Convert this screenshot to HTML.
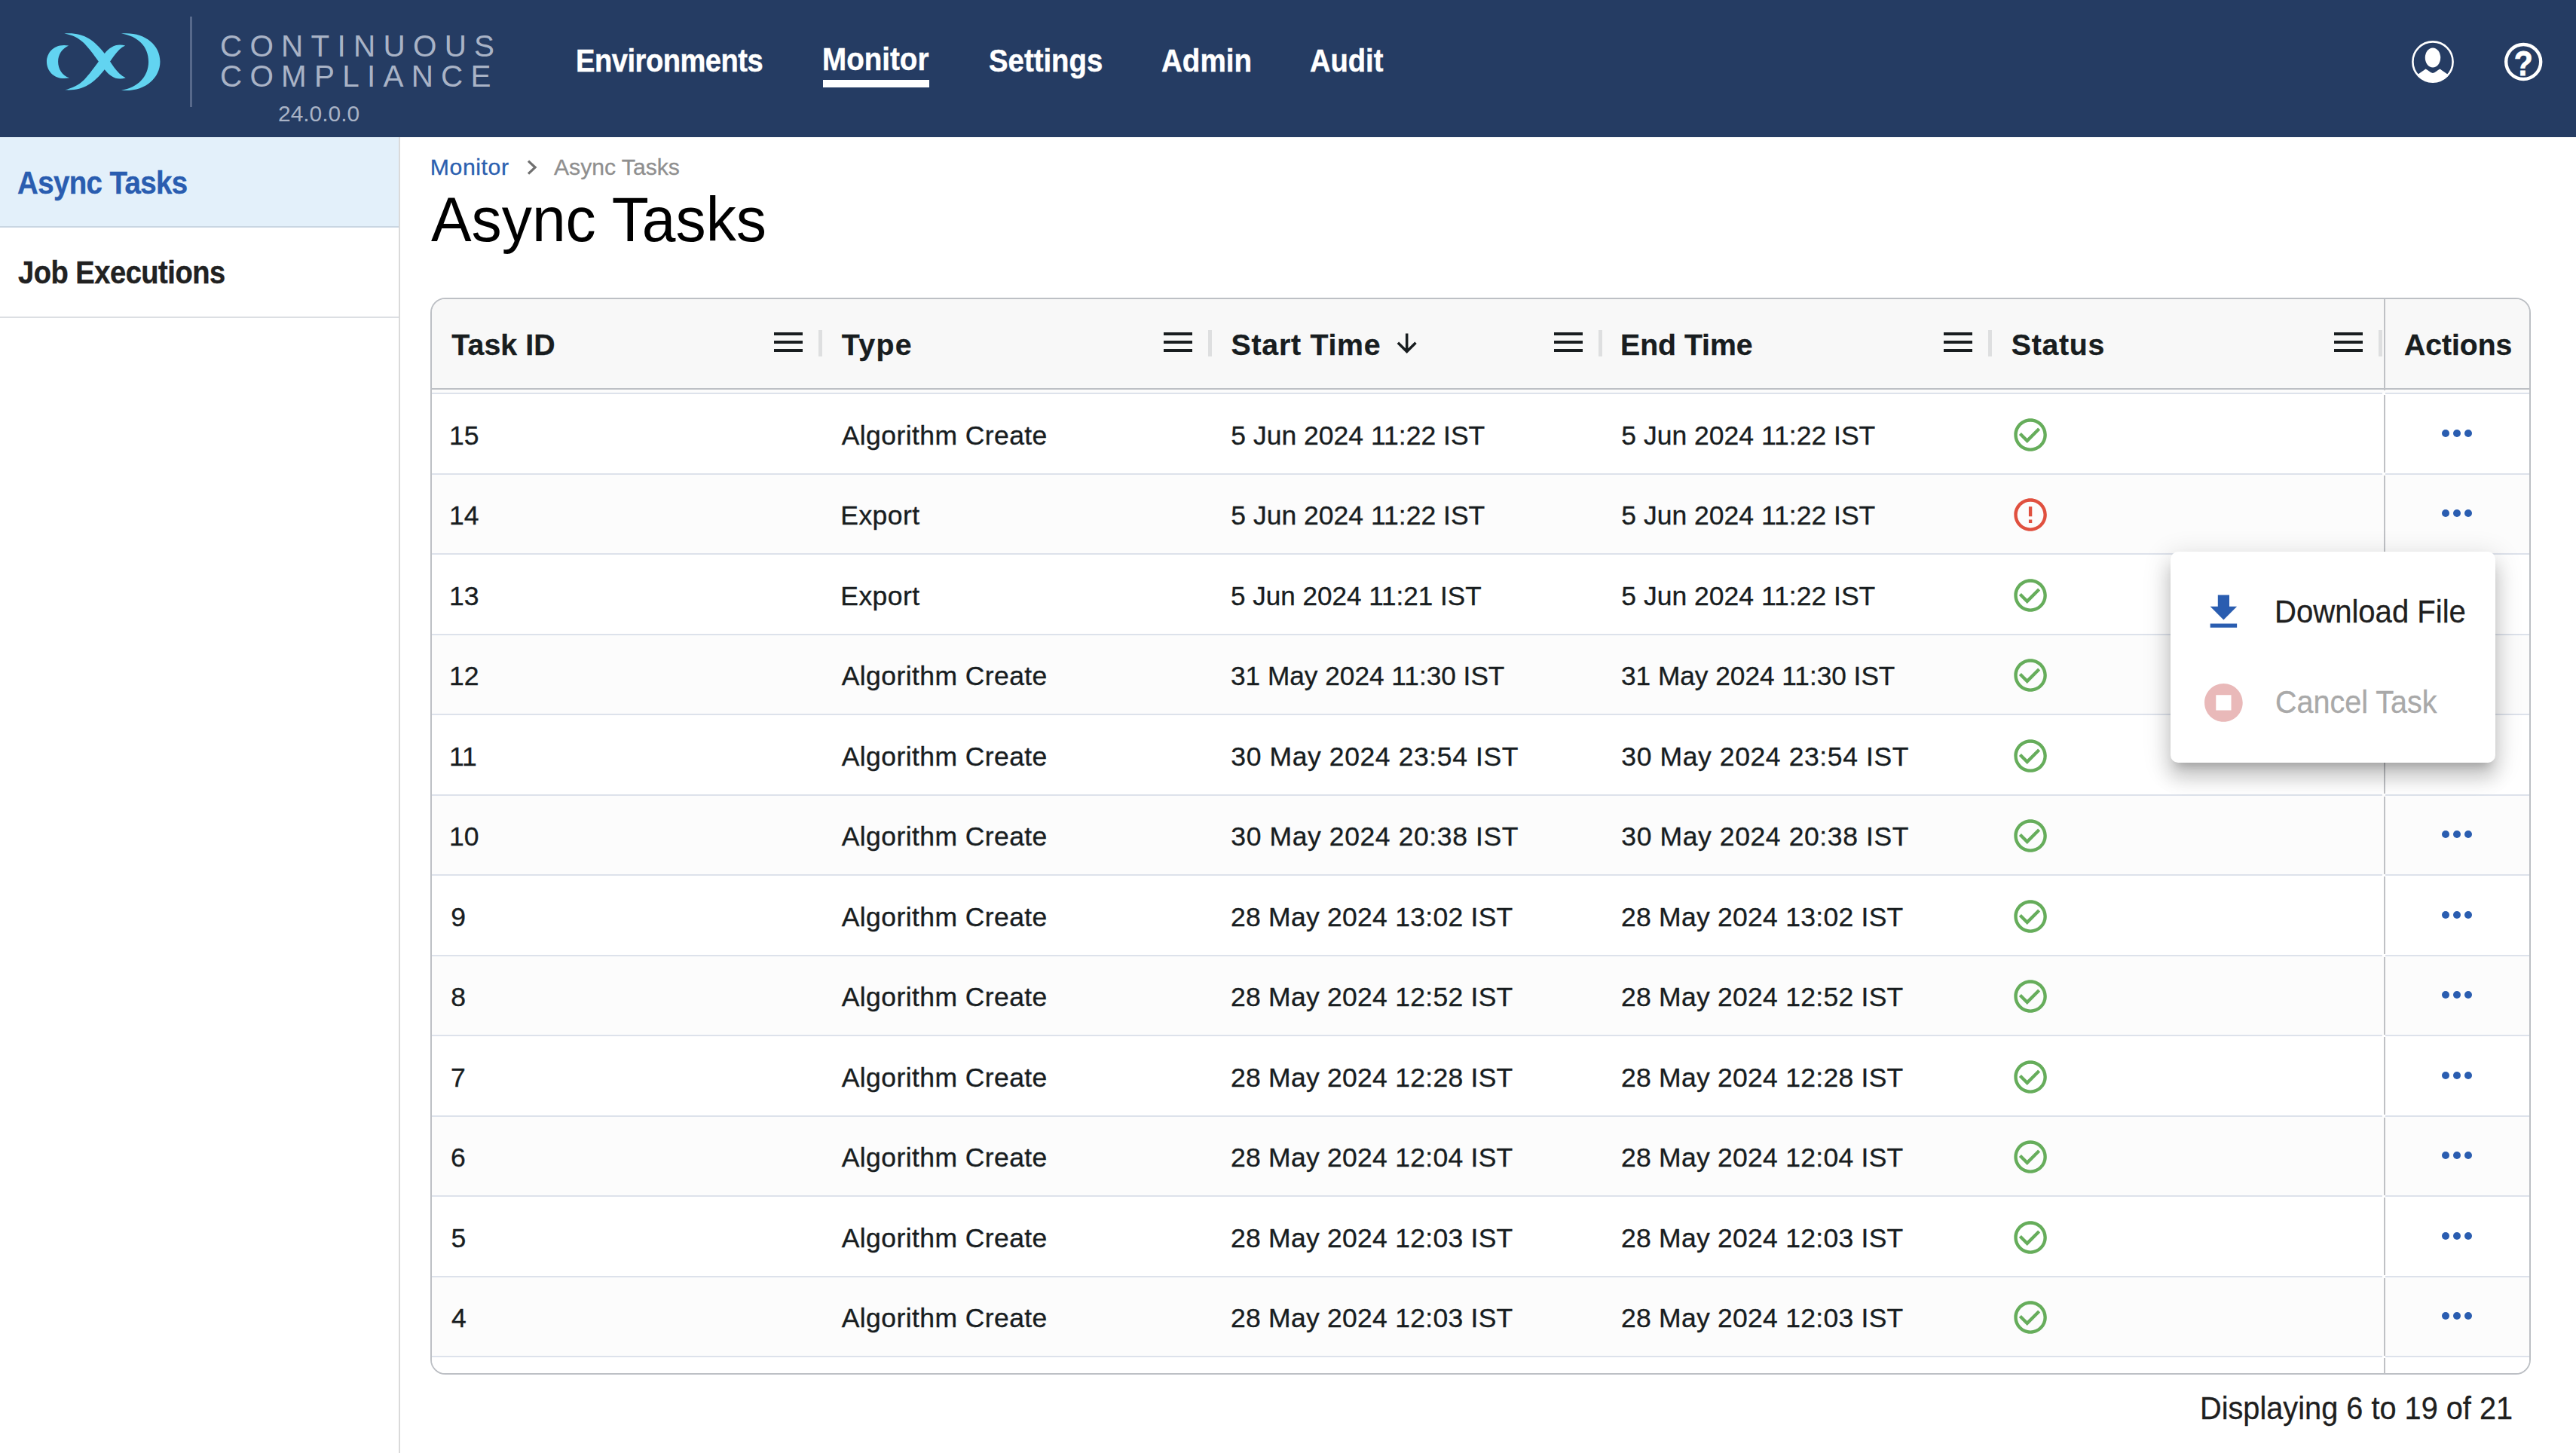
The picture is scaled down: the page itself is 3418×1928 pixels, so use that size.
<!DOCTYPE html>
<html lang="en"><head><meta charset="utf-8"><title>Async Tasks</title>
<style>
html,body{margin:0;padding:0}
body{width:3418px;height:1928px;overflow:hidden;background:#fff;position:relative;font-family:"Liberation Sans",sans-serif}
.t{position:absolute;white-space:nowrap;line-height:1;transform-origin:0 50%}
#hdr{position:absolute;left:0;top:0;width:3418px;height:182px;background:#253c63}
#tbl{position:absolute;border:2px solid #bdc0c5;border-radius:20px;overflow:hidden;background:#fff}
#pop{position:absolute;left:2880px;top:732px;width:431px;height:280px;background:#fff;border-radius:10px;box-shadow:0 12px 13px -8px rgba(0,0,0,.2),0 20px 25px 2px rgba(0,0,0,.14),0 8px 35px 5px rgba(0,0,0,.12)}
</style></head>
<body>
<div id="hdr"></div>
<svg id="logo" viewBox="0 0 2491 1453" style="position:absolute;left:40px;top:20px;width:240px;height:140px" fill="#62d4f1">
<path d="M530,420 C330,385 228,520 228,640 C228,775 340,905 540,865 C440,830 385,740 385,640 C385,545 440,460 530,420 Z"/>
<path d="M470,255 C720,235 870,330 1025,530 C1110,640 1190,810 1315,865 C1190,905 1100,845 1025,750 C945,650 850,500 745,390 C670,315 570,270 470,255 Z"/>
<path d="M480,1030 C720,1045 870,950 1025,750 C1110,640 1190,470 1310,420 C1190,385 1100,435 1025,530 C945,630 850,780 745,890 C670,965 570,1010 480,1030 Z"/>
<path d="M1255,255 C1560,225 1790,400 1790,640 C1790,880 1560,1065 1255,1035 C1480,1000 1630,850 1630,640 C1630,430 1480,290 1255,255 Z"/>
</svg>
<div style="position:absolute;left:252.2px;top:22px;width:2.6px;height:120px;background:#57698b"></div>
<span class="t" style="left:291.95px;top:40.56px;font-size:40.41px;color:#a9b3c6;letter-spacing:10.276px;">CONTINUOUS</span>
<span class="t" style="left:291.95px;top:80.56px;font-size:40.41px;color:#a9b3c6;letter-spacing:10.267px;">COMPLIANCE</span>
<span class="t" style="left:368.99px;top:135.43px;font-size:30.38px;color:#a9b3c6;transform:scaleX(0.9853);">24.0.0.0</span>
<span class="t" style="left:763.75px;top:59.86px;font-size:42.30px;color:#fff;font-weight:700;letter-spacing:-0.517px;transform:scaleX(0.9000);-webkit-text-stroke:0.45px #fff;">Environments</span>
<span class="t" style="left:1091.02px;top:58.26px;font-size:42.30px;color:#fff;font-weight:700;transform:scaleX(0.9124);-webkit-text-stroke:0.45px #fff;">Monitor</span>
<div style="position:absolute;left:1091.9px;top:105.9px;width:141.2px;height:9.8px;background:#fff"></div>
<span class="t" style="left:1311.90px;top:59.86px;font-size:42.30px;color:#fff;font-weight:700;transform:scaleX(0.9066);-webkit-text-stroke:0.45px #fff;">Settings</span>
<span class="t" style="left:1541.04px;top:59.86px;font-size:42.30px;color:#fff;font-weight:700;transform:scaleX(0.9124);-webkit-text-stroke:0.45px #fff;">Admin</span>
<span class="t" style="left:1737.85px;top:59.86px;font-size:42.30px;color:#fff;font-weight:700;transform:scaleX(0.9015);-webkit-text-stroke:0.45px #fff;">Audit</span>
<svg style="position:absolute;left:3198px;top:52px;width:60px;height:60px" viewBox="0 0 60 60">
<defs><clipPath id="uc"><circle cx="30" cy="30" r="26.6"/></clipPath></defs>
<circle cx="30" cy="30" r="26.6" fill="none" stroke="#fff" stroke-width="2.6"/>
<ellipse cx="30" cy="24.5" rx="10.2" ry="13" fill="#fff"/>
<path clip-path="url(#uc)" d="M8,60 L8,48 C13,45 17,42 20.5,39.5 C24,41 27,44.5 30,45 C33,44.5 36,41 39.5,39.5 C43,42 47,45 52,48 L52,60 Z" fill="#fff"/>
</svg>
<svg style="position:absolute;left:3318px;top:52px;width:60px;height:60px" viewBox="0 0 60 60">
<circle cx="30.2" cy="30" r="23" fill="none" stroke="#fff" stroke-width="4.4"/>
<text transform="translate(30.2 47.6) scale(0.88 1)" x="0" y="0" text-anchor="middle" font-family="Liberation Sans, sans-serif" font-weight="700" font-size="46.5" fill="#fff" stroke="#fff" stroke-width="0.9">?</text>
</svg>
<div style="position:absolute;left:0;top:182px;width:529px;height:118.3px;background:#e3f0fa"></div>
<div style="position:absolute;left:0;top:300.3px;width:529px;height:2px;background:#c9d6e2"></div>
<div style="position:absolute;left:0;top:419.5px;width:529px;height:2px;background:#dcdfe3"></div>
<div style="position:absolute;left:529px;top:182px;width:2px;height:1746px;background:#dadada"></div>
<span class="t" style="left:23.04px;top:221.19px;font-size:42.73px;color:#2a5db0;font-weight:700;letter-spacing:-0.665px;transform:scaleX(0.9000);-webkit-text-stroke:0.4px #2a5db0;">Async Tasks</span>
<span class="t" style="left:23.92px;top:340.86px;font-size:42.30px;color:#212121;font-weight:700;letter-spacing:-0.530px;transform:scaleX(0.9000);-webkit-text-stroke:0.4px #212121;">Job Executions</span>
<span class="t" style="left:570.72px;top:206.55px;font-size:30.23px;color:#2b5fb0;letter-spacing:0.595px;-webkit-text-stroke:0.3px #2b5fb0;">Monitor</span>
<svg style="position:absolute;left:696px;top:210px;width:20px;height:25px" viewBox="0 0 20 25"><path d="M5.0,3.6 L14.0,12.1 L5.0,20.6" fill="none" stroke="#707070" stroke-width="3.3"/></svg>
<span class="t" style="left:735.34px;top:206.55px;font-size:30.23px;color:#8f8f8f;transform:scaleX(0.9969);-webkit-text-stroke:0.3px #8f8f8f;">Async Tasks</span>
<span class="t" style="left:571.84px;top:250.89px;font-size:82.85px;color:#000;transform:scaleX(0.9698);">Async Tasks</span>
<div id="tbl" style="left:570.8px;top:395.0px;width:2783.2px;height:1425.0px">
<div style="position:absolute;left:0.00px;top:0.00px;width:2783.20px;height:120.00px;background:#f8f8f8;"></div>
<div style="position:absolute;left:0.00px;top:120.00px;width:2783.20px;height:5.10px;background:#fcfcfc;"></div>
<div style="position:absolute;left:0.00px;top:125.10px;width:2783.20px;height:106.50px;background:#ffffff;"></div>
<div style="position:absolute;left:0.00px;top:231.60px;width:2783.20px;height:106.50px;background:#fcfcfc;"></div>
<div style="position:absolute;left:0.00px;top:338.10px;width:2783.20px;height:106.50px;background:#ffffff;"></div>
<div style="position:absolute;left:0.00px;top:444.60px;width:2783.20px;height:106.50px;background:#fcfcfc;"></div>
<div style="position:absolute;left:0.00px;top:551.10px;width:2783.20px;height:106.50px;background:#ffffff;"></div>
<div style="position:absolute;left:0.00px;top:657.60px;width:2783.20px;height:106.50px;background:#fcfcfc;"></div>
<div style="position:absolute;left:0.00px;top:764.10px;width:2783.20px;height:106.50px;background:#ffffff;"></div>
<div style="position:absolute;left:0.00px;top:870.60px;width:2783.20px;height:106.50px;background:#fcfcfc;"></div>
<div style="position:absolute;left:0.00px;top:977.10px;width:2783.20px;height:106.50px;background:#ffffff;"></div>
<div style="position:absolute;left:0.00px;top:1083.60px;width:2783.20px;height:106.50px;background:#fcfcfc;"></div>
<div style="position:absolute;left:0.00px;top:1190.10px;width:2783.20px;height:106.50px;background:#ffffff;"></div>
<div style="position:absolute;left:0.00px;top:1296.60px;width:2783.20px;height:106.50px;background:#fcfcfc;"></div>
<div style="position:absolute;left:0.00px;top:1403.10px;width:2783.20px;height:106.50px;background:#ffffff;"></div>
<div style="position:absolute;left:0.00px;top:117.80px;width:2783.20px;height:2.20px;background:#bdc0c5;"></div>
<div style="position:absolute;left:0.00px;top:124.10px;width:2588.20px;height:2.00px;background:#dde2eb;"></div>
<div style="position:absolute;left:2592.20px;top:124.10px;width:191.00px;height:2.00px;background:#dde2eb;"></div>
<div style="position:absolute;left:0.00px;top:230.60px;width:2588.20px;height:2.00px;background:#dde2eb;"></div>
<div style="position:absolute;left:2592.20px;top:230.60px;width:191.00px;height:2.00px;background:#dde2eb;"></div>
<div style="position:absolute;left:0.00px;top:337.10px;width:2588.20px;height:2.00px;background:#dde2eb;"></div>
<div style="position:absolute;left:2592.20px;top:337.10px;width:191.00px;height:2.00px;background:#dde2eb;"></div>
<div style="position:absolute;left:0.00px;top:443.60px;width:2588.20px;height:2.00px;background:#dde2eb;"></div>
<div style="position:absolute;left:2592.20px;top:443.60px;width:191.00px;height:2.00px;background:#dde2eb;"></div>
<div style="position:absolute;left:0.00px;top:550.10px;width:2588.20px;height:2.00px;background:#dde2eb;"></div>
<div style="position:absolute;left:2592.20px;top:550.10px;width:191.00px;height:2.00px;background:#dde2eb;"></div>
<div style="position:absolute;left:0.00px;top:656.60px;width:2588.20px;height:2.00px;background:#dde2eb;"></div>
<div style="position:absolute;left:2592.20px;top:656.60px;width:191.00px;height:2.00px;background:#dde2eb;"></div>
<div style="position:absolute;left:0.00px;top:763.10px;width:2588.20px;height:2.00px;background:#dde2eb;"></div>
<div style="position:absolute;left:2592.20px;top:763.10px;width:191.00px;height:2.00px;background:#dde2eb;"></div>
<div style="position:absolute;left:0.00px;top:869.60px;width:2588.20px;height:2.00px;background:#dde2eb;"></div>
<div style="position:absolute;left:2592.20px;top:869.60px;width:191.00px;height:2.00px;background:#dde2eb;"></div>
<div style="position:absolute;left:0.00px;top:976.10px;width:2588.20px;height:2.00px;background:#dde2eb;"></div>
<div style="position:absolute;left:2592.20px;top:976.10px;width:191.00px;height:2.00px;background:#dde2eb;"></div>
<div style="position:absolute;left:0.00px;top:1082.60px;width:2588.20px;height:2.00px;background:#dde2eb;"></div>
<div style="position:absolute;left:2592.20px;top:1082.60px;width:191.00px;height:2.00px;background:#dde2eb;"></div>
<div style="position:absolute;left:0.00px;top:1189.10px;width:2588.20px;height:2.00px;background:#dde2eb;"></div>
<div style="position:absolute;left:2592.20px;top:1189.10px;width:191.00px;height:2.00px;background:#dde2eb;"></div>
<div style="position:absolute;left:0.00px;top:1295.60px;width:2588.20px;height:2.00px;background:#dde2eb;"></div>
<div style="position:absolute;left:2592.20px;top:1295.60px;width:191.00px;height:2.00px;background:#dde2eb;"></div>
<div style="position:absolute;left:0.00px;top:1402.10px;width:2588.20px;height:2.00px;background:#dde2eb;"></div>
<div style="position:absolute;left:2592.20px;top:1402.10px;width:191.00px;height:2.00px;background:#dde2eb;"></div>
<div style="position:absolute;left:2590.20px;top:0.00px;width:2.10px;height:120.50px;background:#bfc1c5;"></div>
<div style="position:absolute;left:2590.20px;top:127.30px;width:2.10px;height:102.90px;background:#bfc1c5;"></div>
<div style="position:absolute;left:2590.20px;top:233.80px;width:2.10px;height:102.90px;background:#bfc1c5;"></div>
<div style="position:absolute;left:2590.20px;top:340.30px;width:2.10px;height:102.90px;background:#bfc1c5;"></div>
<div style="position:absolute;left:2590.20px;top:446.80px;width:2.10px;height:102.90px;background:#bfc1c5;"></div>
<div style="position:absolute;left:2590.20px;top:553.30px;width:2.10px;height:102.90px;background:#bfc1c5;"></div>
<div style="position:absolute;left:2590.20px;top:659.80px;width:2.10px;height:102.90px;background:#bfc1c5;"></div>
<div style="position:absolute;left:2590.20px;top:766.30px;width:2.10px;height:102.90px;background:#bfc1c5;"></div>
<div style="position:absolute;left:2590.20px;top:872.80px;width:2.10px;height:102.90px;background:#bfc1c5;"></div>
<div style="position:absolute;left:2590.20px;top:979.30px;width:2.10px;height:102.90px;background:#bfc1c5;"></div>
<div style="position:absolute;left:2590.20px;top:1085.80px;width:2.10px;height:102.90px;background:#bfc1c5;"></div>
<div style="position:absolute;left:2590.20px;top:1192.30px;width:2.10px;height:102.90px;background:#bfc1c5;"></div>
<div style="position:absolute;left:2590.20px;top:1298.80px;width:2.10px;height:102.90px;background:#bfc1c5;"></div>
<div style="position:absolute;left:2590.20px;top:1405.30px;width:2.10px;height:19.70px;background:#bfc1c5;"></div>
<div style="position:absolute;left:513.40px;top:41.00px;width:4.90px;height:34.80px;background:#dedfe0;"></div>
<div style="position:absolute;left:454.60px;top:43.95px;width:38.00px;height:3.90px;background:#181d1f;"></div>
<div style="position:absolute;left:454.60px;top:55.05px;width:38.00px;height:3.90px;background:#181d1f;"></div>
<div style="position:absolute;left:454.60px;top:66.25px;width:38.00px;height:3.90px;background:#181d1f;"></div>
<div style="position:absolute;left:1030.00px;top:41.00px;width:4.90px;height:34.80px;background:#dedfe0;"></div>
<div style="position:absolute;left:971.20px;top:43.95px;width:38.00px;height:3.90px;background:#181d1f;"></div>
<div style="position:absolute;left:971.20px;top:55.05px;width:38.00px;height:3.90px;background:#181d1f;"></div>
<div style="position:absolute;left:971.20px;top:66.25px;width:38.00px;height:3.90px;background:#181d1f;"></div>
<div style="position:absolute;left:1548.00px;top:41.00px;width:4.90px;height:34.80px;background:#dedfe0;"></div>
<div style="position:absolute;left:1489.20px;top:43.95px;width:38.00px;height:3.90px;background:#181d1f;"></div>
<div style="position:absolute;left:1489.20px;top:55.05px;width:38.00px;height:3.90px;background:#181d1f;"></div>
<div style="position:absolute;left:1489.20px;top:66.25px;width:38.00px;height:3.90px;background:#181d1f;"></div>
<div style="position:absolute;left:2065.20px;top:41.00px;width:4.90px;height:34.80px;background:#dedfe0;"></div>
<div style="position:absolute;left:2006.40px;top:43.95px;width:38.00px;height:3.90px;background:#181d1f;"></div>
<div style="position:absolute;left:2006.40px;top:55.05px;width:38.00px;height:3.90px;background:#181d1f;"></div>
<div style="position:absolute;left:2006.40px;top:66.25px;width:38.00px;height:3.90px;background:#181d1f;"></div>
<div style="position:absolute;left:2583.00px;top:41.00px;width:4.90px;height:34.80px;background:#dedfe0;"></div>
<div style="position:absolute;left:2524.20px;top:43.95px;width:38.00px;height:3.90px;background:#181d1f;"></div>
<div style="position:absolute;left:2524.20px;top:55.05px;width:38.00px;height:3.90px;background:#181d1f;"></div>
<div style="position:absolute;left:2524.20px;top:66.25px;width:38.00px;height:3.90px;background:#181d1f;"></div>
</div>
<span class="t" style="left:599.26px;top:437.94px;font-size:39.24px;color:#181d1f;font-weight:700;letter-spacing:0.134px;-webkit-text-stroke:0.3px #181d1f;">Task ID</span>
<span class="t" style="left:1116.86px;top:437.94px;font-size:39.24px;color:#181d1f;font-weight:700;letter-spacing:1.333px;-webkit-text-stroke:0.3px #181d1f;">Type</span>
<span class="t" style="left:1633.57px;top:437.94px;font-size:39.24px;color:#181d1f;font-weight:700;letter-spacing:0.763px;-webkit-text-stroke:0.3px #181d1f;">Start Time</span>
<span class="t" style="left:2150.08px;top:437.94px;font-size:39.24px;color:#181d1f;font-weight:700;transform:scaleX(0.9986);-webkit-text-stroke:0.3px #181d1f;">End Time</span>
<span class="t" style="left:2668.77px;top:437.94px;font-size:39.24px;color:#181d1f;font-weight:700;letter-spacing:0.741px;-webkit-text-stroke:0.3px #181d1f;">Status</span>
<span class="t" style="left:3190.23px;top:437.94px;font-size:39.24px;color:#181d1f;font-weight:700;transform:scaleX(0.9963);-webkit-text-stroke:0.3px #181d1f;">Actions</span>
<svg style="position:absolute;left:1850px;top:440px;width:34px;height:34px" viewBox="0 0 34 34"><path d="M16.7,2.6 V26 M4.9,14.8 L16.7,26.6 L28.5,14.8" fill="none" stroke="#181d1f" stroke-width="3.5"/></svg>
<span class="t" style="left:595.90px;top:560.95px;font-size:35.50px;color:#181d1f;-webkit-text-stroke:0.35px #181d1f;">15</span>
<span class="t" style="left:1116.73px;top:560.95px;font-size:35.50px;color:#181d1f;letter-spacing:0.419px;-webkit-text-stroke:0.35px #181d1f;">Algorithm Create</span>
<span class="t" style="left:1633.28px;top:560.95px;font-size:35.50px;color:#181d1f;letter-spacing:0.011px;-webkit-text-stroke:0.35px #181d1f;">5 Jun 2024 11:22 IST</span>
<span class="t" style="left:2151.28px;top:560.95px;font-size:35.50px;color:#181d1f;letter-spacing:0.011px;-webkit-text-stroke:0.35px #181d1f;">5 Jun 2024 11:22 IST</span>
<svg style="position:absolute;left:2668.00px;top:550.75px;width:52.2px;height:52.2px" viewBox="0 0 24 24" fill="#66ad5b"><path d="M16.59 7.58L10 14.17l-3.59-3.58L5 12l5 5 8-8zM12 2C6.48 2 2 6.48 2 12s4.48 10 10 10 10-4.48 10-10S17.52 2 12 2zm0 18c-4.42 0-8-3.58-8-8s3.58-8 8-8 8 3.58 8 8-3.58 8-8 8z"/></svg>
<div style="position:absolute;left:3239.60px;top:569.85px;width:10px;height:10px;border-radius:50%;background:#2a5db0"></div>
<div style="position:absolute;left:3254.70px;top:569.85px;width:10px;height:10px;border-radius:50%;background:#2a5db0"></div>
<div style="position:absolute;left:3269.80px;top:569.85px;width:10px;height:10px;border-radius:50%;background:#2a5db0"></div>
<span class="t" style="left:595.90px;top:667.45px;font-size:35.50px;color:#181d1f;-webkit-text-stroke:0.35px #181d1f;">14</span>
<span class="t" style="left:1115.29px;top:667.45px;font-size:35.50px;color:#181d1f;letter-spacing:0.454px;-webkit-text-stroke:0.35px #181d1f;">Export</span>
<span class="t" style="left:1633.28px;top:667.45px;font-size:35.50px;color:#181d1f;letter-spacing:0.011px;-webkit-text-stroke:0.35px #181d1f;">5 Jun 2024 11:22 IST</span>
<span class="t" style="left:2151.28px;top:667.45px;font-size:35.50px;color:#181d1f;letter-spacing:0.011px;-webkit-text-stroke:0.35px #181d1f;">5 Jun 2024 11:22 IST</span>
<svg style="position:absolute;left:2668.00px;top:657.25px;width:52.2px;height:52.2px" viewBox="0 0 24 24" fill="#e0503f"><path d="M11 15h2v2h-2zm0-8h2v6h-2zm.99-5C6.47 2 2 6.48 2 12s4.47 10 9.99 10C17.52 22 22 17.52 22 12S17.52 2 11.99 2zM12 20c-4.42 0-8-3.58-8-8s3.58-8 8-8 8 3.58 8 8-3.58 8-8 8z"/></svg>
<div style="position:absolute;left:3239.60px;top:676.35px;width:10px;height:10px;border-radius:50%;background:#2a5db0"></div>
<div style="position:absolute;left:3254.70px;top:676.35px;width:10px;height:10px;border-radius:50%;background:#2a5db0"></div>
<div style="position:absolute;left:3269.80px;top:676.35px;width:10px;height:10px;border-radius:50%;background:#2a5db0"></div>
<span class="t" style="left:595.90px;top:773.95px;font-size:35.50px;color:#181d1f;-webkit-text-stroke:0.35px #181d1f;">13</span>
<span class="t" style="left:1115.29px;top:773.95px;font-size:35.50px;color:#181d1f;letter-spacing:0.454px;-webkit-text-stroke:0.35px #181d1f;">Export</span>
<span class="t" style="left:1633.30px;top:773.95px;font-size:35.50px;color:#181d1f;transform:scaleX(0.9875);-webkit-text-stroke:0.35px #181d1f;">5 Jun 2024 11:21 IST</span>
<span class="t" style="left:2151.28px;top:773.95px;font-size:35.50px;color:#181d1f;letter-spacing:0.011px;-webkit-text-stroke:0.35px #181d1f;">5 Jun 2024 11:22 IST</span>
<svg style="position:absolute;left:2668.00px;top:763.75px;width:52.2px;height:52.2px" viewBox="0 0 24 24" fill="#66ad5b"><path d="M16.59 7.58L10 14.17l-3.59-3.58L5 12l5 5 8-8zM12 2C6.48 2 2 6.48 2 12s4.48 10 10 10 10-4.48 10-10S17.52 2 12 2zm0 18c-4.42 0-8-3.58-8-8s3.58-8 8-8 8 3.58 8 8-3.58 8-8 8z"/></svg>
<span class="t" style="left:595.90px;top:880.45px;font-size:35.50px;color:#181d1f;-webkit-text-stroke:0.35px #181d1f;">12</span>
<span class="t" style="left:1116.73px;top:880.45px;font-size:35.50px;color:#181d1f;letter-spacing:0.419px;-webkit-text-stroke:0.35px #181d1f;">Algorithm Create</span>
<span class="t" style="left:1633.36px;top:880.45px;font-size:35.50px;color:#181d1f;transform:scaleX(0.9917);-webkit-text-stroke:0.35px #181d1f;">31 May 2024 11:30 IST</span>
<span class="t" style="left:2151.36px;top:880.45px;font-size:35.50px;color:#181d1f;transform:scaleX(0.9917);-webkit-text-stroke:0.35px #181d1f;">31 May 2024 11:30 IST</span>
<svg style="position:absolute;left:2668.00px;top:870.25px;width:52.2px;height:52.2px" viewBox="0 0 24 24" fill="#66ad5b"><path d="M16.59 7.58L10 14.17l-3.59-3.58L5 12l5 5 8-8zM12 2C6.48 2 2 6.48 2 12s4.48 10 10 10 10-4.48 10-10S17.52 2 12 2zm0 18c-4.42 0-8-3.58-8-8s3.58-8 8-8 8 3.58 8 8-3.58 8-8 8z"/></svg>
<span class="t" style="left:595.90px;top:986.95px;font-size:35.50px;color:#181d1f;-webkit-text-stroke:0.35px #181d1f;">11</span>
<span class="t" style="left:1116.73px;top:986.95px;font-size:35.50px;color:#181d1f;letter-spacing:0.419px;-webkit-text-stroke:0.35px #181d1f;">Algorithm Create</span>
<span class="t" style="left:1633.35px;top:986.95px;font-size:35.50px;color:#181d1f;letter-spacing:0.601px;-webkit-text-stroke:0.35px #181d1f;">30 May 2024 23:54 IST</span>
<span class="t" style="left:2151.35px;top:986.95px;font-size:35.50px;color:#181d1f;letter-spacing:0.601px;-webkit-text-stroke:0.35px #181d1f;">30 May 2024 23:54 IST</span>
<svg style="position:absolute;left:2668.00px;top:976.75px;width:52.2px;height:52.2px" viewBox="0 0 24 24" fill="#66ad5b"><path d="M16.59 7.58L10 14.17l-3.59-3.58L5 12l5 5 8-8zM12 2C6.48 2 2 6.48 2 12s4.48 10 10 10 10-4.48 10-10S17.52 2 12 2zm0 18c-4.42 0-8-3.58-8-8s3.58-8 8-8 8 3.58 8 8-3.58 8-8 8z"/></svg>
<span class="t" style="left:595.90px;top:1093.45px;font-size:35.50px;color:#181d1f;-webkit-text-stroke:0.35px #181d1f;">10</span>
<span class="t" style="left:1116.73px;top:1093.45px;font-size:35.50px;color:#181d1f;letter-spacing:0.419px;-webkit-text-stroke:0.35px #181d1f;">Algorithm Create</span>
<span class="t" style="left:1633.35px;top:1093.45px;font-size:35.50px;color:#181d1f;letter-spacing:0.601px;-webkit-text-stroke:0.35px #181d1f;">30 May 2024 20:38 IST</span>
<span class="t" style="left:2151.35px;top:1093.45px;font-size:35.50px;color:#181d1f;letter-spacing:0.601px;-webkit-text-stroke:0.35px #181d1f;">30 May 2024 20:38 IST</span>
<svg style="position:absolute;left:2668.00px;top:1083.25px;width:52.2px;height:52.2px" viewBox="0 0 24 24" fill="#66ad5b"><path d="M16.59 7.58L10 14.17l-3.59-3.58L5 12l5 5 8-8zM12 2C6.48 2 2 6.48 2 12s4.48 10 10 10 10-4.48 10-10S17.52 2 12 2zm0 18c-4.42 0-8-3.58-8-8s3.58-8 8-8 8 3.58 8 8-3.58 8-8 8z"/></svg>
<div style="position:absolute;left:3239.60px;top:1102.35px;width:10px;height:10px;border-radius:50%;background:#2a5db0"></div>
<div style="position:absolute;left:3254.70px;top:1102.35px;width:10px;height:10px;border-radius:50%;background:#2a5db0"></div>
<div style="position:absolute;left:3269.80px;top:1102.35px;width:10px;height:10px;border-radius:50%;background:#2a5db0"></div>
<span class="t" style="left:598.14px;top:1199.95px;font-size:35.50px;color:#181d1f;-webkit-text-stroke:0.35px #181d1f;">9</span>
<span class="t" style="left:1116.73px;top:1199.95px;font-size:35.50px;color:#181d1f;letter-spacing:0.419px;-webkit-text-stroke:0.35px #181d1f;">Algorithm Create</span>
<span class="t" style="left:1632.91px;top:1199.95px;font-size:35.50px;color:#181d1f;letter-spacing:0.268px;-webkit-text-stroke:0.35px #181d1f;">28 May 2024 13:02 IST</span>
<span class="t" style="left:2150.91px;top:1199.95px;font-size:35.50px;color:#181d1f;letter-spacing:0.268px;-webkit-text-stroke:0.35px #181d1f;">28 May 2024 13:02 IST</span>
<svg style="position:absolute;left:2668.00px;top:1189.75px;width:52.2px;height:52.2px" viewBox="0 0 24 24" fill="#66ad5b"><path d="M16.59 7.58L10 14.17l-3.59-3.58L5 12l5 5 8-8zM12 2C6.48 2 2 6.48 2 12s4.48 10 10 10 10-4.48 10-10S17.52 2 12 2zm0 18c-4.42 0-8-3.58-8-8s3.58-8 8-8 8 3.58 8 8-3.58 8-8 8z"/></svg>
<div style="position:absolute;left:3239.60px;top:1208.85px;width:10px;height:10px;border-radius:50%;background:#2a5db0"></div>
<div style="position:absolute;left:3254.70px;top:1208.85px;width:10px;height:10px;border-radius:50%;background:#2a5db0"></div>
<div style="position:absolute;left:3269.80px;top:1208.85px;width:10px;height:10px;border-radius:50%;background:#2a5db0"></div>
<span class="t" style="left:598.26px;top:1306.45px;font-size:35.50px;color:#181d1f;-webkit-text-stroke:0.35px #181d1f;">8</span>
<span class="t" style="left:1116.73px;top:1306.45px;font-size:35.50px;color:#181d1f;letter-spacing:0.419px;-webkit-text-stroke:0.35px #181d1f;">Algorithm Create</span>
<span class="t" style="left:1632.91px;top:1306.45px;font-size:35.50px;color:#181d1f;letter-spacing:0.268px;-webkit-text-stroke:0.35px #181d1f;">28 May 2024 12:52 IST</span>
<span class="t" style="left:2150.91px;top:1306.45px;font-size:35.50px;color:#181d1f;letter-spacing:0.268px;-webkit-text-stroke:0.35px #181d1f;">28 May 2024 12:52 IST</span>
<svg style="position:absolute;left:2668.00px;top:1296.25px;width:52.2px;height:52.2px" viewBox="0 0 24 24" fill="#66ad5b"><path d="M16.59 7.58L10 14.17l-3.59-3.58L5 12l5 5 8-8zM12 2C6.48 2 2 6.48 2 12s4.48 10 10 10 10-4.48 10-10S17.52 2 12 2zm0 18c-4.42 0-8-3.58-8-8s3.58-8 8-8 8 3.58 8 8-3.58 8-8 8z"/></svg>
<div style="position:absolute;left:3239.60px;top:1315.35px;width:10px;height:10px;border-radius:50%;background:#2a5db0"></div>
<div style="position:absolute;left:3254.70px;top:1315.35px;width:10px;height:10px;border-radius:50%;background:#2a5db0"></div>
<div style="position:absolute;left:3269.80px;top:1315.35px;width:10px;height:10px;border-radius:50%;background:#2a5db0"></div>
<span class="t" style="left:597.98px;top:1412.95px;font-size:35.50px;color:#181d1f;-webkit-text-stroke:0.35px #181d1f;">7</span>
<span class="t" style="left:1116.73px;top:1412.95px;font-size:35.50px;color:#181d1f;letter-spacing:0.419px;-webkit-text-stroke:0.35px #181d1f;">Algorithm Create</span>
<span class="t" style="left:1632.91px;top:1412.95px;font-size:35.50px;color:#181d1f;letter-spacing:0.268px;-webkit-text-stroke:0.35px #181d1f;">28 May 2024 12:28 IST</span>
<span class="t" style="left:2150.91px;top:1412.95px;font-size:35.50px;color:#181d1f;letter-spacing:0.268px;-webkit-text-stroke:0.35px #181d1f;">28 May 2024 12:28 IST</span>
<svg style="position:absolute;left:2668.00px;top:1402.75px;width:52.2px;height:52.2px" viewBox="0 0 24 24" fill="#66ad5b"><path d="M16.59 7.58L10 14.17l-3.59-3.58L5 12l5 5 8-8zM12 2C6.48 2 2 6.48 2 12s4.48 10 10 10 10-4.48 10-10S17.52 2 12 2zm0 18c-4.42 0-8-3.58-8-8s3.58-8 8-8 8 3.58 8 8-3.58 8-8 8z"/></svg>
<div style="position:absolute;left:3239.60px;top:1421.85px;width:10px;height:10px;border-radius:50%;background:#2a5db0"></div>
<div style="position:absolute;left:3254.70px;top:1421.85px;width:10px;height:10px;border-radius:50%;background:#2a5db0"></div>
<div style="position:absolute;left:3269.80px;top:1421.85px;width:10px;height:10px;border-radius:50%;background:#2a5db0"></div>
<span class="t" style="left:598.00px;top:1519.45px;font-size:35.50px;color:#181d1f;-webkit-text-stroke:0.35px #181d1f;">6</span>
<span class="t" style="left:1116.73px;top:1519.45px;font-size:35.50px;color:#181d1f;letter-spacing:0.419px;-webkit-text-stroke:0.35px #181d1f;">Algorithm Create</span>
<span class="t" style="left:1632.91px;top:1519.45px;font-size:35.50px;color:#181d1f;letter-spacing:0.268px;-webkit-text-stroke:0.35px #181d1f;">28 May 2024 12:04 IST</span>
<span class="t" style="left:2150.91px;top:1519.45px;font-size:35.50px;color:#181d1f;letter-spacing:0.268px;-webkit-text-stroke:0.35px #181d1f;">28 May 2024 12:04 IST</span>
<svg style="position:absolute;left:2668.00px;top:1509.25px;width:52.2px;height:52.2px" viewBox="0 0 24 24" fill="#66ad5b"><path d="M16.59 7.58L10 14.17l-3.59-3.58L5 12l5 5 8-8zM12 2C6.48 2 2 6.48 2 12s4.48 10 10 10 10-4.48 10-10S17.52 2 12 2zm0 18c-4.42 0-8-3.58-8-8s3.58-8 8-8 8 3.58 8 8-3.58 8-8 8z"/></svg>
<div style="position:absolute;left:3239.60px;top:1528.35px;width:10px;height:10px;border-radius:50%;background:#2a5db0"></div>
<div style="position:absolute;left:3254.70px;top:1528.35px;width:10px;height:10px;border-radius:50%;background:#2a5db0"></div>
<div style="position:absolute;left:3269.80px;top:1528.35px;width:10px;height:10px;border-radius:50%;background:#2a5db0"></div>
<span class="t" style="left:598.38px;top:1625.95px;font-size:35.50px;color:#181d1f;-webkit-text-stroke:0.35px #181d1f;">5</span>
<span class="t" style="left:1116.73px;top:1625.95px;font-size:35.50px;color:#181d1f;letter-spacing:0.419px;-webkit-text-stroke:0.35px #181d1f;">Algorithm Create</span>
<span class="t" style="left:1632.91px;top:1625.95px;font-size:35.50px;color:#181d1f;letter-spacing:0.268px;-webkit-text-stroke:0.35px #181d1f;">28 May 2024 12:03 IST</span>
<span class="t" style="left:2150.91px;top:1625.95px;font-size:35.50px;color:#181d1f;letter-spacing:0.268px;-webkit-text-stroke:0.35px #181d1f;">28 May 2024 12:03 IST</span>
<svg style="position:absolute;left:2668.00px;top:1615.75px;width:52.2px;height:52.2px" viewBox="0 0 24 24" fill="#66ad5b"><path d="M16.59 7.58L10 14.17l-3.59-3.58L5 12l5 5 8-8zM12 2C6.48 2 2 6.48 2 12s4.48 10 10 10 10-4.48 10-10S17.52 2 12 2zm0 18c-4.42 0-8-3.58-8-8s3.58-8 8-8 8 3.58 8 8-3.58 8-8 8z"/></svg>
<div style="position:absolute;left:3239.60px;top:1634.85px;width:10px;height:10px;border-radius:50%;background:#2a5db0"></div>
<div style="position:absolute;left:3254.70px;top:1634.85px;width:10px;height:10px;border-radius:50%;background:#2a5db0"></div>
<div style="position:absolute;left:3269.80px;top:1634.85px;width:10px;height:10px;border-radius:50%;background:#2a5db0"></div>
<span class="t" style="left:598.99px;top:1732.45px;font-size:35.50px;color:#181d1f;-webkit-text-stroke:0.35px #181d1f;">4</span>
<span class="t" style="left:1116.73px;top:1732.45px;font-size:35.50px;color:#181d1f;letter-spacing:0.419px;-webkit-text-stroke:0.35px #181d1f;">Algorithm Create</span>
<span class="t" style="left:1632.91px;top:1732.45px;font-size:35.50px;color:#181d1f;letter-spacing:0.268px;-webkit-text-stroke:0.35px #181d1f;">28 May 2024 12:03 IST</span>
<span class="t" style="left:2150.91px;top:1732.45px;font-size:35.50px;color:#181d1f;letter-spacing:0.268px;-webkit-text-stroke:0.35px #181d1f;">28 May 2024 12:03 IST</span>
<svg style="position:absolute;left:2668.00px;top:1722.25px;width:52.2px;height:52.2px" viewBox="0 0 24 24" fill="#66ad5b"><path d="M16.59 7.58L10 14.17l-3.59-3.58L5 12l5 5 8-8zM12 2C6.48 2 2 6.48 2 12s4.48 10 10 10 10-4.48 10-10S17.52 2 12 2zm0 18c-4.42 0-8-3.58-8-8s3.58-8 8-8 8 3.58 8 8-3.58 8-8 8z"/></svg>
<div style="position:absolute;left:3239.60px;top:1741.35px;width:10px;height:10px;border-radius:50%;background:#2a5db0"></div>
<div style="position:absolute;left:3254.70px;top:1741.35px;width:10px;height:10px;border-radius:50%;background:#2a5db0"></div>
<div style="position:absolute;left:3269.80px;top:1741.35px;width:10px;height:10px;border-radius:50%;background:#2a5db0"></div>
<span class="t" style="left:2918.94px;top:1848.48px;font-size:42.15px;color:#1f1f1f;transform:scaleX(0.9425);-webkit-text-stroke:0.3px #1f1f1f;">Displaying 6 to 19 of 21</span>
<div id="pop"></div>
<svg style="position:absolute;left:2919.9px;top:781.7px;width:60.8px;height:60.8px" viewBox="0 0 24 24" fill="#2a5db0"><path d="M19 9h-4V3H9v6H5l7 7 7-7zM5 18v2h14v-2H5z"/></svg>
<span class="t" style="left:3018.11px;top:791.13px;font-size:41.86px;color:#1f1f1f;transform:scaleX(0.9571);-webkit-text-stroke:0.3px #1f1f1f;">Download File</span>
<svg style="position:absolute;left:2919.6px;top:901.6px;width:60.8px;height:60.8px" viewBox="0 0 24 24" fill="#e9b9b9"><path d="M12 2C6.48 2 2 6.48 2 12s4.48 10 10 10 10-4.48 10-10S17.52 2 12 2zm4 14H8V8h8v8z"/></svg>
<span class="t" style="left:3019.39px;top:911.28px;font-size:42.15px;color:#a9a9a9;transform:scaleX(0.9372);-webkit-text-stroke:0.3px #a9a9a9;">Cancel Task</span>
</body></html>
